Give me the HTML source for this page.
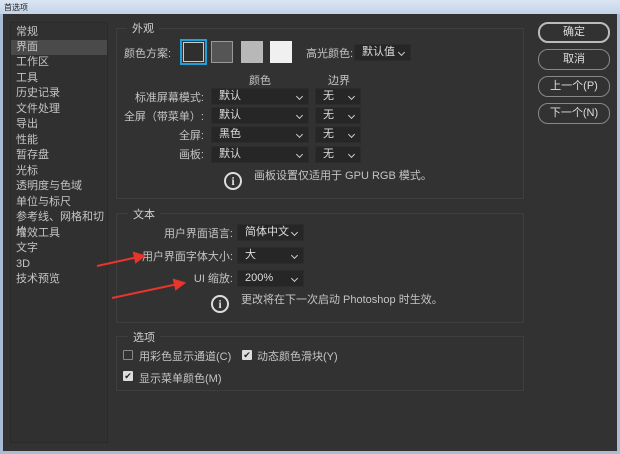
<!DOCTYPE html><html><head><meta charset="utf-8"><style>
*{margin:0;padding:0;box-sizing:border-box}
body{width:620px;height:454px;background:#a9bcd4;font-family:"Liberation Sans","Noto Sans CJK SC",sans-serif;font-size:11px;color:#c4c4c4;position:relative;overflow:hidden}
.title{position:absolute;left:0;top:0;width:620px;height:14px;background:linear-gradient(#dbe6f3,#c2d3e8);font-size:8px;color:#222;padding:2px 4px}
.win{position:absolute;left:3px;top:14px;width:614px;height:437px;background:#323232}
.a{position:absolute;white-space:nowrap}
.side{position:absolute;left:10px;top:22px;width:98px;height:421px;border:1px solid #2a2a2a;background:#303030}
.side div{position:absolute;left:5px;height:15px;line-height:15px}
.box{position:absolute;left:116px;width:408px;border:1px solid #3e3e3e}
.lg{position:absolute;background:#323232;padding:0 5px;color:#d0d0d0}
.sel{position:absolute;height:17px;background:#262626;border:1px solid #2c2c2c;padding-left:7px;line-height:15px;color:#ddd}
.sel:after{content:"";position:absolute;right:6px;top:5px;width:4px;height:4px;border-right:1px solid #ccc;border-bottom:1px solid #ccc;transform:rotate(45deg)}
.btn{position:absolute;left:538px;width:72px;height:21px;border:1px solid #bbb;border-radius:10px;text-align:center;line-height:19px;color:#ddd}
.sw{position:absolute;top:41px;width:22px;height:22px}
.r{text-align:right}
.cb{position:absolute;width:10px;height:10px;border:1px solid #888;border-radius:1px}
.cb.on{background:#ddd;border-color:#ddd;color:#222;font-size:9px;line-height:9px;text-align:center}
.info{position:absolute;width:18px;height:18px;border:2px solid #ddd;border-radius:50%;text-align:center;font:bold 12px/14px "Liberation Serif",serif;color:#ddd}
</style></head><body>
<div class="title">首选项</div>
<div class="win"></div>
<div class="side">
<div style="top:2px">常规</div>
<div style="top:17px;left:0;width:96px;background:#4a4a4a;padding-left:5px">界面</div>
<div style="top:32px">工作区</div><div style="top:48px">工具</div><div style="top:63px">历史记录</div><div style="top:79px">文件处理</div><div style="top:94px">导出</div><div style="top:110px">性能</div><div style="top:125px">暂存盘</div><div style="top:141px">光标</div><div style="top:156px">透明度与色域</div><div style="top:172px">单位与标尺</div><div style="top:187px">参考线、网格和切片</div><div style="top:203px">增效工具</div><div style="top:218px">文字</div><div style="top:234px">3D</div><div style="top:249px">技术预览</div>
</div>
<div class="box" style="top:28px;height:171px"></div><div class="lg" style="left:127px;top:20px">外观</div>
<div class="a" style="left:124px;top:45px">颜色方案:</div>
<div class="sw" style="left:180px;top:39px;width:27px;height:26px;border:2px solid #1fa0d8;padding:1px"><div style="width:21px;height:20px;background:#2f2f2f;border:1px solid #ccc"></div></div>
<div class="sw" style="left:211px;background:#555;border:1px solid #999"></div>
<div class="sw" style="left:241px;background:#b8b8b8"></div>
<div class="sw" style="left:270px;background:#f0f0f0"></div>
<div class="a" style="left:306px;top:45px">高光颜色:</div>
<div class="sel" style="left:354px;top:44px;width:57px">默认值</div>
<div class="a" style="left:249px;top:72px">颜色</div><div class="a" style="left:328px;top:72px">边界</div>
<div class="a r" style="left:120px;width:84px;top:89px">标准屏幕模式:</div>
<div class="a r" style="left:120px;width:84px;top:108px">全屏（带菜单）:</div>
<div class="a r" style="left:120px;width:84px;top:127px">全屏:</div>
<div class="a r" style="left:120px;width:84px;top:146px">画板:</div>
<div class="sel" style="left:211px;top:88px;width:98px">默认</div><div class="sel" style="left:315px;top:88px;width:46px">无</div>
<div class="sel" style="left:211px;top:107px;width:98px">默认</div><div class="sel" style="left:315px;top:107px;width:46px">无</div>
<div class="sel" style="left:211px;top:126px;width:98px">黑色</div><div class="sel" style="left:315px;top:126px;width:46px">无</div>
<div class="sel" style="left:211px;top:146px;width:98px">默认</div><div class="sel" style="left:315px;top:146px;width:46px">无</div>
<div class="info" style="left:224px;top:172px">i</div>
<div class="a" style="left:254px;top:167px">画板设置仅适用于 GPU RGB 模式。</div>

<div class="box" style="top:213px;height:110px"></div><div class="lg" style="left:128px;top:206px">文本</div>
<div class="a r" style="left:120px;width:113px;top:225px">用户界面语言:</div>
<div class="a r" style="left:120px;width:113px;top:248px">用户界面字体大小:</div>
<div class="a r" style="left:120px;width:113px;top:270px">UI 缩放:</div>
<div class="sel" style="left:237px;top:224px;width:67px">简体中文</div>
<div class="sel" style="left:237px;top:247px;width:67px">大</div>
<div class="sel" style="left:237px;top:270px;width:67px">200%</div>
<div class="info" style="left:211px;top:295px">i</div>
<div class="a" style="left:241px;top:291px">更改将在下一次启动 Photoshop 时生效。</div>

<div class="box" style="top:336px;height:55px"></div><div class="lg" style="left:128px;top:329px">选项</div>
<div class="cb" style="left:123px;top:350px"></div><div class="a" style="left:139px;top:348px">用彩色显示通道(C)</div>
<div class="cb on" style="left:242px;top:350px">✔</div><div class="a" style="left:257px;top:348px">动态颜色滑块(Y)</div>
<div class="cb on" style="left:123px;top:371px">✔</div><div class="a" style="left:139px;top:370px">显示菜单颜色(M)</div>

<div class="btn" style="top:22px;border-width:2px;line-height:17px">确定</div>
<div class="btn" style="top:49px;border-color:#888">取消</div>
<div class="btn" style="top:76px;border-color:#888">上一个(P)</div>
<div class="btn" style="top:103px;border-color:#888">下一个(N)</div>
<svg style="position:absolute;left:0;top:0" width="620" height="454"><g stroke="#e8352a" stroke-width="2" fill="#e8352a"><line x1="97" y1="266" x2="138" y2="257"/><polygon points="144,256 134,253 136,262"/><line x1="112" y1="298" x2="178" y2="284"/><polygon points="184,283 174,280 176,289"/></g></svg>
</body></html>
